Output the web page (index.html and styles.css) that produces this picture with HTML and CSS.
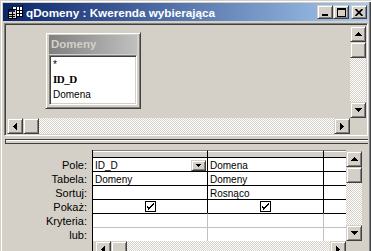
FILE: index.html
```html
<!DOCTYPE html>
<html lang="pl">
<head>
    <meta charset="UTF-8">
    <title>qDomeny : Kwerenda wybierająca</title>
    <link rel="stylesheet" href="styles.css">
</head>
<body>
    <div class="window">
        <!-- pasek tytułu -->
        <div class="titlebar">
            <svg class="app-icon" width="16" height="16" viewBox="0 0 16 16" shape-rendering="crispEdges">
                <rect x="5" y="1" width="10" height="11" fill="#fff" stroke="#000"/>
                <rect x="5" y="1" width="10" height="2" fill="#0a246a"/>
                <path d="M5 6h10M5 9h10M9 3v9M12 3v9" stroke="#000"/>
                <rect x="1" y="5" width="8" height="9" fill="#d4d0c8" stroke="#000"/>
                <rect x="2" y="6" width="6" height="2" fill="#0a246a"/>
                <path d="M2 10h6M2 12h6M5 8v6" stroke="#000"/>
            </svg>
            <span class="title">qDomeny : Kwerenda wybierająca</span>
            <div class="caption-buttons">
                <div class="cap-btn">
                    <svg width="8" height="7" viewBox="0 0 8 7" shape-rendering="crispEdges"><rect x="1" y="5" width="6" height="2" fill="#000"/></svg>
                </div>
                <div class="cap-btn">
                    <svg width="9" height="9" viewBox="0 0 9 9" shape-rendering="crispEdges"><path d="M0 0h9v9h-9z M1 2v6h7v-6z" fill="#000" fill-rule="evenodd"/></svg>
                </div>
                <div class="cap-btn close">
                    <svg width="8" height="7" viewBox="0 0 8 7"><path d="M0.5 0 L7.5 7 M7.5 0 L0.5 7" stroke="#000" stroke-width="1.7"/></svg>
                </div>
            </div>
        </div>

        <div class="client">
            <!-- okno tabel -->
            <div class="upper">
                <div class="upper-main">
                    <div class="canvas">
                        <div class="fieldlist">
                            <div class="fl-title">Domeny</div>
                            <div class="fl-list">
                                <div class="fl-item">*</div>
                                <div class="fl-item key">ID_D</div>
                                <div class="fl-item">Domena</div>
                            </div>
                        </div>
                    </div>
                    <div class="vscroll">
                        <div class="sb-btn"><svg width="7" height="4" viewBox="0 0 7 4"><path d="M3 0h1v1h-1zM2 1h3v1h-3zM1 2h5v1h-5zM0 3h7v1h-7z"/></svg></div>
                        <div class="sb-btn"></div>
                        <div class="sb-track"></div>
                        <div class="sb-btn"><svg width="7" height="4" viewBox="0 0 7 4"><path d="M0 0h7v1h-7zM1 1h5v1h-5zM2 2h3v1h-3zM3 3h1v1h-1z"/></svg></div>
                    </div>
                </div>
                <div class="hscroll-row">
                    <div class="hscroll">
                        <div class="sb-btn"><svg width="4" height="7" viewBox="0 0 4 7"><path d="M0 3h1v1h-1zM1 2h1v3h-1zM2 1h1v5h-1zM3 0h1v7h-1z"/></svg></div>
                        <div class="sb-btn"></div>
                        <div class="sb-track"></div>
                        <div class="sb-btn"><svg width="4" height="7" viewBox="0 0 4 7"><path d="M0 0h1v7h-1zM1 1h1v5h-1zM2 2h1v3h-1zM3 3h1v1h-1z"/></svg></div>
                    </div>
                    <div class="corner"></div>
                </div>
            </div>

            <div class="splitter"></div>

            <!-- siatka QBE -->
            <div class="lower">
                <div class="labels">
                    <div class="label">Pole:</div>
                    <div class="label">Tabela:</div>
                    <div class="label">Sortuj:</div>
                    <div class="label">Pokaż:</div>
                    <div class="label">Kryteria:</div>
                    <div class="label">lub:</div>
                </div>
                <div class="grid">
                    <div class="grid-main">
                        <div class="qbe">
                            <div class="cell head"></div><div class="cell head"></div><div class="cell head last"></div>

                            <div class="cell">ID_D<span class="drop"><svg width="5" height="3" viewBox="0 0 5 3"><path d="M0 0h5v1h-5zM1 1h3v1h-3zM2 2h1v1h-1z"/></svg></span></div>
                            <div class="cell">Domena</div>
                            <div class="cell last"></div>

                            <div class="cell">Domeny</div>
                            <div class="cell">Domeny</div>
                            <div class="cell last"></div>

                            <div class="cell"></div>
                            <div class="cell">Rosnąco</div>
                            <div class="cell last"></div>

                            <div class="cell check"><span class="checkbox"><svg width="9" height="9" viewBox="0 0 9 9" shape-rendering="crispEdges"><path d="M6 2h1v1h-1zM5 3h2v1h-2zM1 4h1v1h-1zM4 4h2v1h-2zM1 5h4v1h-4zM2 6h2v1h-2zM2 7h1v1h-1zM7 1h1v2h-1z"/></svg></span></div>
                            <div class="cell check"><span class="checkbox"><svg width="9" height="9" viewBox="0 0 9 9" shape-rendering="crispEdges"><path d="M6 2h1v1h-1zM5 3h2v1h-2zM1 4h1v1h-1zM4 4h2v1h-2zM1 5h4v1h-4zM2 6h2v1h-2zM2 7h1v1h-1zM7 1h1v2h-1z"/></svg></span></div>
                            <div class="cell last"></div>

                            <div class="cell soft"></div><div class="cell soft"></div><div class="cell soft last"></div>
                            <div class="cell faint"></div><div class="cell faint"></div><div class="cell faint last"></div>
                        </div>
                        <div class="vscroll small">
                            <div class="sb-btn"><svg width="7" height="4" viewBox="0 0 7 4"><path d="M3 0h1v1h-1zM2 1h3v1h-3zM1 2h5v1h-5zM0 3h7v1h-7z"/></svg></div>
                            <div class="sb-btn"></div>
                            <div class="sb-track"></div>
                            <div class="sb-btn"><svg width="7" height="4" viewBox="0 0 7 4"><path d="M0 0h7v1h-7zM1 1h5v1h-5zM2 2h3v1h-3zM3 3h1v1h-1z"/></svg></div>
                        </div>
                    </div>
                    <div class="hscroll-row">
                        <div class="hscroll grid-h">
                            <div class="sb-btn"><svg width="4" height="7" viewBox="0 0 4 7"><path d="M0 3h1v1h-1zM1 2h1v3h-1zM2 1h1v5h-1zM3 0h1v7h-1z"/></svg></div>
                            <div class="sb-btn"></div>
                            <div class="sb-track"></div>
                            <div class="sb-btn"><svg width="4" height="7" viewBox="0 0 4 7"><path d="M0 0h1v7h-1zM1 1h1v5h-1zM2 2h1v3h-1zM3 3h1v1h-1z"/></svg></div>
                        </div>
                        <div class="corner"></div>
                    </div>
                </div>
            </div>
        </div>
    </div>
</body>
</html>
```

FILE: styles.css
```css
* {
    box-sizing: border-box;
}
body {
    margin: 0;
    background-color: #d4d0c8;
    font-family: "Liberation Sans", Arial, sans-serif;
    color: #000;
}
.window {
    width: 371px;
    height: 251px;
    overflow: hidden;
    background-color: #d4d0c8;
    padding: 3px 2px 0 3px;
    box-shadow: inset 1px 1px #d4d0c8, inset 2px 2px #fff, inset -1px 0 #404040, inset -2px 0 #808080;
}

/* pasek tytułu */
.titlebar {
    height: 18px;
    display: flex;
    align-items: center;
    padding: 0 2px 0 4px;
    background: linear-gradient(to right, #0a246a, #a6caf0);
    color: #fff;
}
.app-icon {
    flex: none;
}
.title {
    flex: 1;
    margin-left: 3px;
    font-weight: bold;
    font-size: 11.7px;
    white-space: nowrap;
}
.caption-buttons {
    display: flex;
}
.cap-btn {
    width: 16px;
    height: 14px;
    display: flex;
    align-items: center;
    justify-content: center;
    background-color: #d4d0c8;
    border: 1px solid;
    border-color: #d4d0c8 #404040 #404040 #d4d0c8;
    box-shadow: inset 1px 1px #fff, inset -1px -1px #808080;
}
.cap-btn.close {
    margin-left: 2px;
}

.client {
    display: flex;
    flex-direction: column;
    padding: 2px 1px 0 1px;
}

/* okno tabel */
.upper {
    height: 113px;
    display: flex;
    flex-direction: column;
    padding: 2px 1px 1px 2px;
    border: 1px solid;
    border-color: #808080 #fff #fff #808080;
    box-shadow: inset 1px 1px #404040, inset -1px -1px #d4d0c8;
}
.upper-main {
    flex: 1;
    display: flex;
    min-height: 0;
}
.canvas {
    flex: 1;
}
.fieldlist {
    width: 96px;
    height: 77px;
    margin: 6px 0 0 38px;
    padding: 2px;
    background-color: #d4d0c8;
    border: 1px solid;
    border-color: #d4d0c8 #404040 #404040 #d4d0c8;
    box-shadow: inset 1px 1px #fff, inset -1px -1px #808080;
}
.fl-title {
    height: 19px;
    margin: 0 1px;
    padding-left: 2px;
    line-height: 19px;
    font-size: 11.5px;
    font-weight: bold;
    color: #d4d0c8;
    background: linear-gradient(to right, #808080, #c0c0c0);
}
.fl-list {
    height: 50px;
    margin: 1px 1px 0;
    padding: 1px 0 0 3px;
    background-color: #fff;
    border: 1px solid;
    border-color: #808080 #fff #fff #808080;
    box-shadow: inset 1px 1px #404040, inset -1px -1px #d4d0c8;
}
.fl-item {
    height: 15px;
    line-height: 15px;
    font-size: 10px;
}
.fl-item.key {
    font-family: "Liberation Serif", "Times New Roman", serif;
    font-weight: bold;
    font-size: 11px;
    letter-spacing: -0.5px;
}

/* paski przewijania */
.vscroll {
    width: 16px;
    flex: none;
    display: flex;
    flex-direction: column;
}
.hscroll-row {
    height: 16px;
    flex: none;
    display: flex;
}
.hscroll {
    flex: 1;
    display: flex;
}
.corner {
    width: 16px;
    flex: none;
}
.sb-btn {
    width: 16px;
    height: 16px;
    flex: none;
    display: flex;
    align-items: center;
    justify-content: center;
    background-color: #d4d0c8;
    border: 1px solid;
    border-color: #d4d0c8 #404040 #404040 #d4d0c8;
    box-shadow: inset 1px 1px #fff, inset -1px -1px #808080;
}
.sb-track {
    flex: 1;
    background-color: #fff;
    background-image: conic-gradient(#d4d0c8 25%, #fff 0 50%, #d4d0c8 0 75%, #fff 0);
    background-size: 2px 2px;
}

.splitter {
    height: 5px;
    margin: 3px 0 0 1px;
    border: 1px solid #404040;
    border-right: none;
    background-color: #d4d0c8;
    box-shadow: inset 0 1px #fff;
}

/* siatka QBE */
.lower {
    display: flex;
}
.labels {
    width: 88px;
    padding: 14px 5px 0 0;
    text-align: right;
    font-size: 11px;
}
.label {
    height: 14px;
    line-height: 14px;
}
.grid {
    width: 270px;
    margin-top: 6px;
    border-left: 1px solid #000;
}
.grid-main {
    display: flex;
}
.qbe {
    display: grid;
    grid-template-columns: 115px 116px 22px;
    grid-template-rows: 7px repeat(6, 14px);
    background-color: #fff;
}
.cell {
    display: flex;
    justify-content: space-between;
    align-items: flex-start;
    padding: 1px 0 0 2px;
    font-size: 10px;
    line-height: 13px;
    white-space: nowrap;
    border-top: 1px solid #000;
    border-right: 1px solid #000;
}
.cell.last {
    border-right: none;
}
.cell.head {
    background-color: #d4d0c8;
    box-shadow: inset 0 1px #fff;
    border-top-color: #808080;
}
.cell.faint {
    border-top-color: #c0c0c0;
    border-right-color: #c0c0c0;
}
.cell.soft {
    border-right-color: #c0c0c0;
}
.cell.check {
    justify-content: center;
    padding-left: 0;
}
.checkbox {
    width: 11px;
    height: 11px;
    display: flex;
    align-items: center;
    justify-content: center;
    background-color: #fff;
    border: 1px solid #000;
}
.drop {
    width: 15px;
    height: 11px;
    margin: 0 1px 0 0;
    align-self: flex-end;
    display: flex;
    align-items: center;
    justify-content: center;
    background-color: #d4d0c8;
    border: 1px solid;
    border-color: #d4d0c8 #404040 #404040 #d4d0c8;
    box-shadow: inset 1px 1px #fff, inset -1px -1px #808080;
}
.vscroll.small {
    height: 90px;
    margin-top: 1px;
}
.grid-h {
    padding-left: 2px;
}
```
